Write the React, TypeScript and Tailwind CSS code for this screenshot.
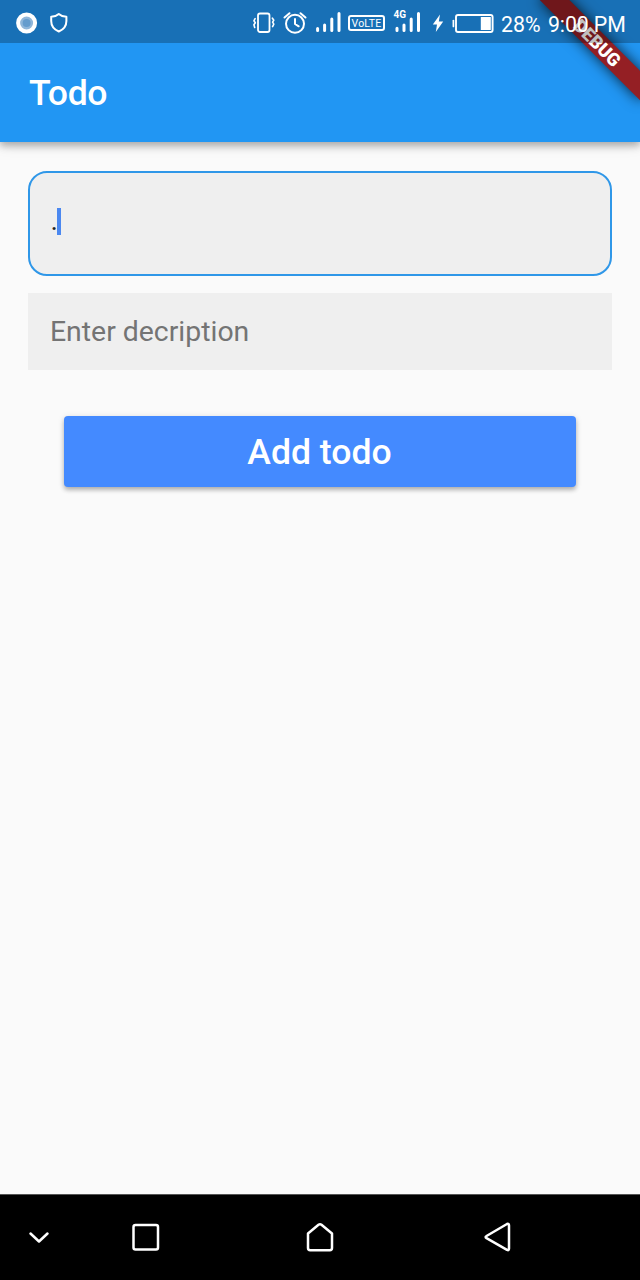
import type { ReactNode } from "react";

function Glyph({ w, className = "", children }: { w: number; className?: string; children: ReactNode }) {
  return (
    <svg
      width={w}
      height={42}
      viewBox={`0 0 ${w} 42`}
      fill="none"
      stroke="white"
      strokeWidth={2}
      strokeLinecap="round"
      strokeLinejoin="round"
      className={`block shrink-0 ${className}`}
    >
      {children}
    </svg>
  );
}

function StatusBar() {
  return (
    <div className="relative z-20 flex h-[42.6px] items-start bg-black/25 text-white">
      <Glyph w={22} className="ml-4">
        <circle cx="10.6" cy="23" r="8.5" fill="#8fb6da" strokeWidth="4" />
        <circle cx="10.6" cy="23" r="4" fill="#659ccd" stroke="none" />
      </Glyph>
      <Glyph w={18} className="ml-3">
        <path d="M8.8 14 C7 15.7 4 16.6 1.2 16.8 V21 C1.2 26 4 29.5 8.8 31.5 C13.6 29.5 16.4 26 16.4 21 V16.8 C13.6 16.6 10.6 15.7 8.8 14Z" />
      </Glyph>
      <Glyph w={24} className="ml-[184px]">
        <rect x="6" y="13.5" width="11.5" height="18.5" rx="2" strokeWidth="1.8" />
        <path d="M3.1 18.6 L1.9 20.8 L3.3 22.8 L1.9 24.8 L2.7 27.4 M20.4 18.2 L21.8 20.2 L20.6 22.2 L21.8 24.2 L20.6 26.6" strokeWidth="1.6" />
      </Glyph>
      <Glyph w={24} className="ml-[7px]">
        <circle cx="12" cy="23.8" r="9" />
        <path d="M1.5 17.5 L6.5 13.2 M17.5 13.2 L22.5 17.5 M12 19 V24 L15.7 26.3" />
      </Glyph>
      <Glyph w={25} className="ml-[9px]">
        <path d="M1.6 28.6 V30.6 M8.6 25 V30.6 M15.8 19 V30.6 M23 13.5 V30.6" strokeWidth="3" />
      </Glyph>
      <Glyph w={37} className="ml-[7px]">
        <rect x="1" y="16" width="35" height="14" rx="2" />
        <text x="18.5" y="27" textAnchor="middle" fontFamily="Roboto, sans-serif" fontSize="10.5" letterSpacing="0.2" fill="white" stroke="none">VoLTE</text>
      </Glyph>
      <Glyph w={28} className="ml-2">
        <text x="0.5" y="18" fontFamily="Roboto, sans-serif" fontSize="10" fontWeight="700" fill="white" stroke="none">4G</text>
        <path d="M4 28.2 V30.6 M11 25 V30.6 M18.2 19 V30.6 M25.5 13.5 V30.6" strokeWidth="3" />
      </Glyph>
      <Glyph w={12} className="ml-[11px]">
        <path d="M8 14.5 L0.8 24.4 H5 L3.8 32 L11.2 21.6 H6.8Z" fill="white" stroke="none" />
      </Glyph>
      <Glyph w={42} className="ml-2">
        <path d="M1.4 20.5 V26.5" strokeWidth="1.7" />
        <rect x="4" y="15" width="36.6" height="17" rx="2" strokeWidth="1.9" />
        <rect x="28.8" y="17" width="10" height="13" fill="white" stroke="none" />
      </Glyph>
      <span className="ml-[7px] mt-[13.5px] w-[41px] shrink-0 whitespace-nowrap text-[21.3px] leading-none">28%</span>
      <span className="ml-1.5 mt-[14px] whitespace-nowrap text-[21.3px] leading-none tracking-[-0.1px]">9:00 PM</span>
    </div>
  );
}

function DebugBanner() {
  return (
    <div className="absolute right-0 top-0 z-10 h-[142px] w-[142px] overflow-hidden">
      <div className="absolute right-[-71px] top-[49.8px] flex h-[21.3px] w-[142px] origin-[71px_-49.8px] rotate-45 items-center justify-center bg-[#941f24] text-[18.1px] font-black leading-none text-white shadow-[0_0_14px_rgba(0,0,0,0.75)]">
        DEBUG
      </div>
    </div>
  );
}

function NavigationBar() {
  return (
    <nav className="flex h-[86px] shrink-0 bg-black">
      <svg width="640" height="86" viewBox="0 0 640 86" fill="none" stroke="white" strokeWidth="2.5" strokeLinecap="round" strokeLinejoin="round">
        <path d="M0 0.5 H640" stroke="#555" strokeWidth="1" />
        <path d="M30.5 39.5 L39 47.5 L47.5 39.5" />
        <rect x="133.5" y="31" width="24.5" height="24.5" rx="2" />
        <path d="M308 39.5 L318.5 30.8 Q320 29.7 321.5 30.8 L332 39.5 V54 Q332 56.2 329.8 56.2 H310.2 Q308 56.2 308 54 Z" />
        <path d="M486.5 42 L507 30 Q509 29.2 509 31.5 V54.5 Q509 57 507 55.8 L486.5 44.2 Q484.7 43 486.5 42Z" />
      </svg>
    </nav>
  );
}

export default function App() {
  return (
    <div className="relative flex h-[1280px] w-[640px] flex-col overflow-hidden bg-[#fafafa] font-['Roboto',sans-serif]">
      <header className="h-[142px] shrink-0 bg-[#2196f3] shadow-[0_4px_7px_rgba(0,0,0,0.25),0_2px_14px_rgba(0,0,0,0.13)]">
        <StatusBar />
        <div className="flex h-[99px] items-center pl-[29px] pt-1">
          <h1 className="text-[35.6px] font-medium leading-none tracking-[-0.4px] text-white">Todo</h1>
        </div>
      </header>
      <DebugBanner />
      <main className="flex flex-1 flex-col px-[28.4px] pt-[28.6px]">
        <div className="flex h-[105px] items-center rounded-[19px] border-2 border-[#2f97e8] bg-[#efefef] pl-5">
          <span className="mb-1 text-[28.4px] leading-none text-black/85">.</span>
          <span className="mb-1 -ml-px h-[27px] w-1 bg-[#4b88f0]" />
        </div>
        <div className="mt-[17.8px] flex h-[76.6px] items-center bg-[#efefef] pl-[21.6px] pt-px">
          <span className="text-[28.4px] leading-none text-[#747474]">Enter decription</span>
        </div>
        <button className="mx-[35.6px] mt-[46px] h-[71px] rounded-[4px] bg-[#448aff] pt-[3px] text-[35.6px] font-medium leading-none text-white shadow-[0_3px_4px_rgba(0,0,0,0.25),0_1px_7px_rgba(0,0,0,0.1)]">
          <span className="-ml-px">Add todo</span>
        </button>
      </main>
      <NavigationBar />
    </div>
  );
}
